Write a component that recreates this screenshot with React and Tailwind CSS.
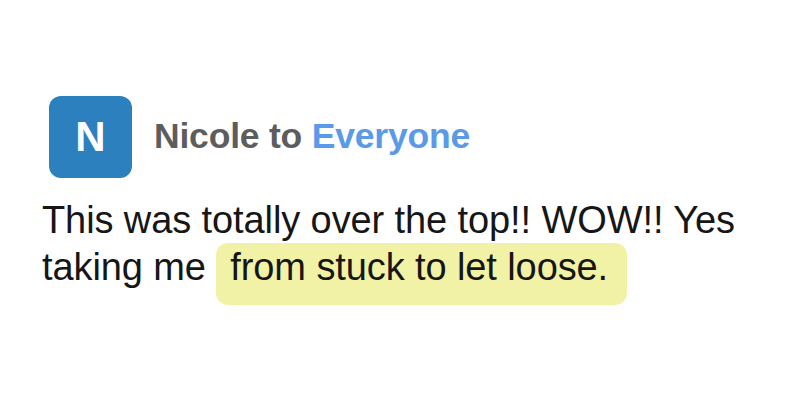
import React from 'react';

// Chat message card: sender avatar, recipient line, highlighted quote
export default function App() {
  return (
    <div className="w-[800px] h-[400px] bg-white px-[42px] pt-[96px] font-['Liberation_Sans',Arial,sans-serif]">
      <div className="flex items-center ml-[7px]">
        <div className="w-[83px] h-[82px] rounded-[12px] bg-[#2b80bd] flex items-center justify-center">
          <span className="text-white font-bold text-[42px] leading-none">N</span>
        </div>
        <div className="ml-[22px] text-[35.5px] font-bold tracking-[-0.2px]">
          <span className="text-[#5d5d5d]">Nicole to </span>
          <span className="text-[#5a9ae8]">Everyone</span>
        </div>
      </div>
      <p className="mt-[19px] text-[38px] leading-[47px] text-[#161616] tracking-[-0.1px]">
        This was totally over the top!! WOW!! Yes taking me{' '}
        <span className="bg-[#f2f2a6] rounded-[12px] pl-[14px] pr-[19px] pt-[3px] pb-[17px]">from stuck to let loose.</span>
      </p>
    </div>
  );
}
